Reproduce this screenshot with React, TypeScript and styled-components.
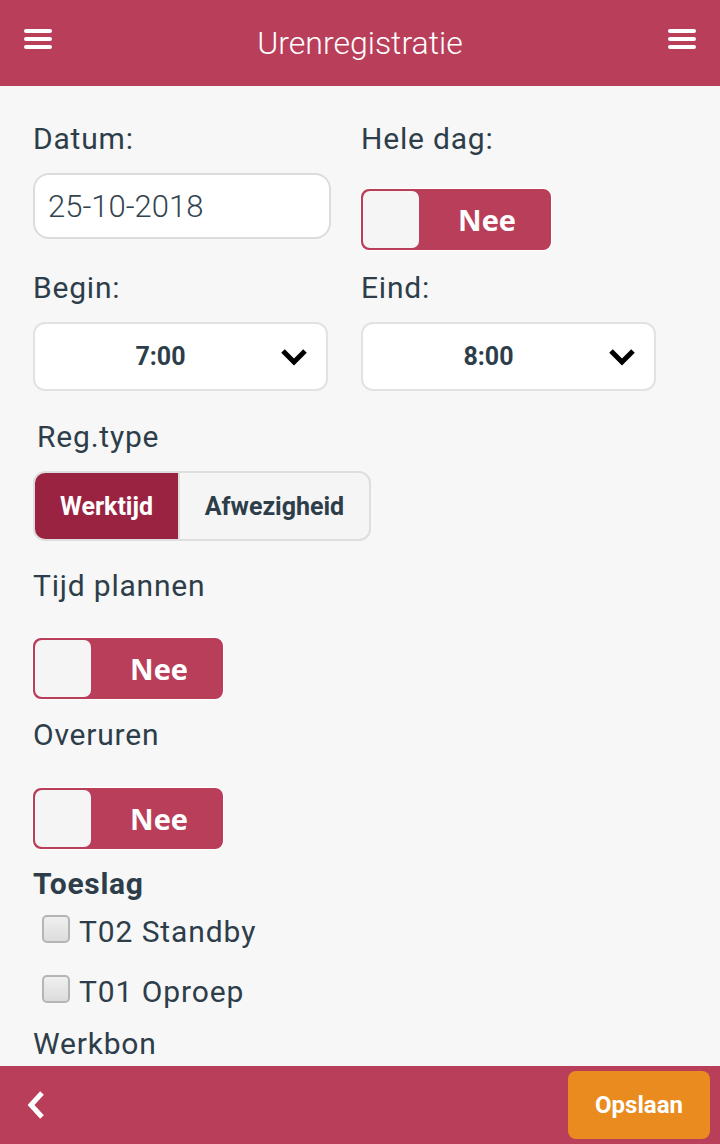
import React from 'react'
import { styled, createGlobalStyle } from 'styled-components'

const GlobalStyle = createGlobalStyle`
  html, body {
    margin: 0;
    padding: 0;
    background: #f7f7f7;
    font-family: Roboto, "Open Sans", sans-serif;
  }
  * { box-sizing: border-box; }
`

const Burger = () => (
  <IconBtn>
    <svg width="28" height="22" viewBox="0 0 28 22">
      <rect x="0" y="1" width="28" height="4" rx="2" fill="#fff" />
      <rect x="0" y="9" width="28" height="4" rx="2" fill="#fff" />
      <rect x="0" y="17" width="28" height="4" rx="2" fill="#fff" />
    </svg>
  </IconBtn>
)

const Chevron = () => (
  <svg width="28" height="18" viewBox="0 0 28 18">
    <polyline points="3,3 14,14 25,3" fill="none" stroke="#000" strokeWidth="5" />
  </svg>
)

const Back = () => (
  <svg width="22" height="30" viewBox="0 0 22 30">
    <polyline points="17,3 6,15 17,27" fill="none" stroke="#fff" strokeWidth="5" />
  </svg>
)

const Toggle = ({ label }: { label: string }) => (
  <ToggleBox>
    <Knob />
    <ToggleText>{label}</ToggleText>
  </ToggleBox>
)

const Select = ({ value }: { value: string }) => (
  <SelectBox>
    <SelectValue>{value}</SelectValue>
    <Chevron />
  </SelectBox>
)

export default function App() {
  return (
    <Page>
      <GlobalStyle />
      <Header>
        <Burger />
        <Title>Urenregistratie</Title>
        <Burger />
      </Header>

      <Content>
        <Grid>
          <Label>Datum:</Label>
          <Label>Hele dag:</Label>
          <DateInput>25-10-2018</DateInput>
          <ToggleCell>
            <Toggle label="Nee" />
          </ToggleCell>
          <Label $top={32}>Begin:</Label>
          <Label $top={32}>Eind:</Label>
          <Select value="7:00" />
          <Select value="8:00" />
        </Grid>

        <Label $top={29} $indent={4}>Reg.type</Label>
        <Segmented>
          <Segment $active>Werktijd</Segment>
          <Segment>Afwezigheid</Segment>
        </Segmented>

        <Label $top={28}>Tijd plannen</Label>
        <ToggleRow $top={35}>
          <Toggle label="Nee" />
        </ToggleRow>

        <Label $top={19}>Overuren</Label>
        <ToggleRow $top={36}>
          <Toggle label="Nee" />
        </ToggleRow>

        <SectionTitle>Toeslag</SectionTitle>
        <CheckRow>
          <Checkbox />
          <span>T02 Standby</span>
        </CheckRow>
        <CheckRow>
          <Checkbox />
          <span>T01 Oproep</span>
        </CheckRow>
        <Label $top={6}>Werkbon</Label>
      </Content>

      <Footer>
        <Back />
        <SaveBtn>Opslaan</SaveBtn>
      </Footer>
    </Page>
  )
}

const Page = styled.div`
  height: 1144px;
  display: flex;
  flex-direction: column;
  overflow: hidden;
`

const Header = styled.header`
  height: 86px;
  flex-shrink: 0;
  background: #b93e5a;
  display: flex;
  align-items: center;
  justify-content: space-between;
  padding: 0 24px;
`

const IconBtn = styled.div`
  display: flex;
  margin-top: -8px;
`

const Title = styled.h1`
  margin: 0;
  color: #fff;
  font-family: Roboto, sans-serif;
  font-weight: 300;
  font-size: 32px;
`

const Content = styled.main`
  flex: 1;
  overflow: hidden;
  padding: 36px 33px 0;
  display: flex;
  flex-direction: column;
  align-items: flex-start;

  & > * {
    flex-shrink: 0;
  }
`

const Grid = styled.div`
  display: grid;
  grid-template-columns: 298px 298px;
  column-gap: 30px;
  width: 100%;
  align-items: start;
`

const Label = styled.div<{ $top?: number; $indent?: number }>`
  font-size: 30px;
  line-height: 34px;
  letter-spacing: 0.8px;
  color: #2d3e4a;
  margin-top: ${p => p.$top ?? 0}px;
  margin-bottom: 17px;
  padding-left: ${p => p.$indent ?? 0}px;
`

const DateInput = styled.div`
  height: 66px;
  background: #fff;
  border: 2px solid #dcdcdc;
  border-radius: 16px;
  display: flex;
  align-items: center;
  padding-left: 13px;
  font-family: Roboto, sans-serif;
  font-size: 31px;
  font-weight: 300;
  color: #34444f;
`

const ToggleCell = styled.div`
  height: 66px;
  padding-top: 16px;
`

const ToggleRow = styled.div<{ $top: number }>`
  margin-top: ${p => p.$top - 17}px;
`

const ToggleBox = styled.div`
  width: 190px;
  height: 61px;
  background: #b93e5a;
  border: 2px solid #b93e5a;
  border-radius: 8px;
  box-shadow: 0 0 0 1px #fff;
  display: flex;
  align-items: stretch;
`

const Knob = styled.div`
  width: 56px;
  background: #f5f5f5;
  border-radius: 7px;
`

const ToggleText = styled.div`
  flex: 1;
  display: flex;
  align-items: center;
  justify-content: center;
  padding-left: 6px;
  color: #fff;
  font-family: "Open Sans", sans-serif;
  font-weight: 700;
  font-size: 29px;
`

const SelectBox = styled.div`
  width: 295px;
  height: 69px;
  background: #fff;
  border: 2px solid #e2e2e2;
  border-radius: 12px;
  display: flex;
  align-items: center;
  padding: 0 18px 0 0;
`

const SelectValue = styled.div`
  flex: 1;
  text-align: center;
  font-family: Roboto, sans-serif;
  font-size: 25px;
  font-weight: 700;
  color: #2d3e4a;
  padding-left: 6px;
`

const Segmented = styled.div`
  display: flex;
  height: 70px;
  width: 338px;
  border: 2px solid #dedede;
  border-radius: 12px;
  overflow: hidden;
  background: #f5f5f5;
`

const Segment = styled.div<{ $active?: boolean }>`
  display: flex;
  align-items: center;
  justify-content: center;
  flex: ${p => (p.$active ? '0 0 145px' : '1')};
  background: ${p => (p.$active ? '#9b2342' : 'transparent')};
  color: ${p => (p.$active ? '#fff' : '#2d3e4a')};
  border-right: ${p => (p.$active ? '2px solid #dedede' : 'none')};
  font-family: Roboto, sans-serif;
  font-size: 25px;
  font-weight: 700;
`

const SectionTitle = styled.div`
  margin-top: 18px;
  font-size: 30px;
  line-height: 34px;
  letter-spacing: 0.7px;
  font-weight: 700;
  color: #2d3e4a;
`

const CheckRow = styled.label`
  display: flex;
  align-items: center;
  height: 60px;
  padding-left: 9px;
  gap: 9px;
  font-size: 30px;
  letter-spacing: 0.9px;
  color: #2d3e4a;
`

const Checkbox = styled.span`
  width: 28px;
  height: 28px;
  border: 2px solid #b5b5b5;
  border-radius: 5px;
  background: linear-gradient(#f0f0f0, #dcdcdc);
  margin-top: -4px;
`

const Footer = styled.footer`
  height: 78px;
  flex-shrink: 0;
  background: #b93e5a;
  display: flex;
  align-items: center;
  justify-content: space-between;
  padding: 0 10px 0 25px;
`

const SaveBtn = styled.button`
  width: 142px;
  height: 68px;
  border: none;
  border-radius: 8px;
  background: #e98b1e;
  color: #fff;
  font-family: Roboto, sans-serif;
  font-weight: 700;
  font-size: 24px;
`
